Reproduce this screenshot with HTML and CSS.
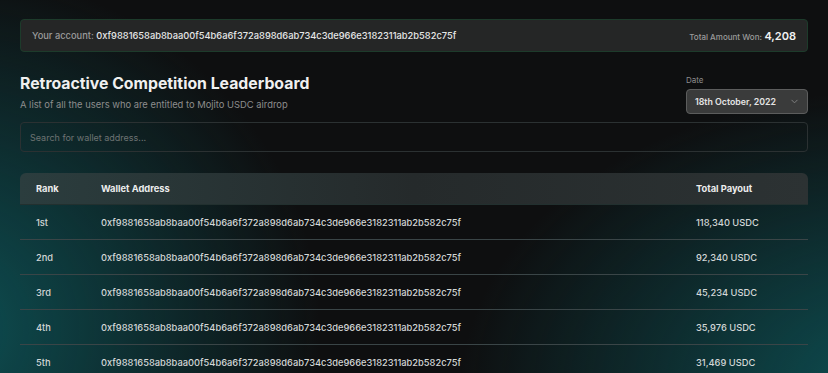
FILE: index.html
```html
<!DOCTYPE html>
<html lang="en">
<head>
  <meta charset="UTF-8">
  <meta name="viewport" content="width=device-width, initial-scale=1.0">
  <title>Leaderboard</title>
  <link rel="stylesheet" href="styles.css">
</head>
<body>
  <div class="account">
    <div class="account-id"><span class="muted">Your account:</span> 0xf9881658ab8baa00f54b6a6f372a898d6ab734c3de966e3182311ab2b582c75f</div>
    <div class="account-won"><span class="muted small">Total Amount Won:</span> <span class="won">4,208</span></div>
  </div>

  <div class="head">
    <div>
      <h1>Retroactive Competition Leaderboard</h1>
      <div class="sub">A list of all the users who are entitled to Mojito USDC airdrop</div>
    </div>
    <div class="date">
      <label>Date</label>
      <div class="select">
        <span>18th October, 2022</span>
        <svg width="9" height="9" viewBox="0 0 10 10"><path d="M2 3.5 L5 6.5 L8 3.5" fill="none" stroke="#7e7e7e" stroke-width="1.1" stroke-linecap="round"/></svg>
      </div>
    </div>
  </div>

  <input class="search" type="text" placeholder="Search for wallet address...">

  <div class="table">
    <div class="row header">
      <div>Rank</div>
      <div>Wallet Address</div>
      <div>Total Payout</div>
    </div>
    <div class="row">
      <div>1st</div>
      <div>0xf9881658ab8baa00f54b6a6f372a898d6ab734c3de966e3182311ab2b582c75f</div>
      <div>118,340 USDC</div>
    </div>
    <div class="row">
      <div>2nd</div>
      <div>0xf9881658ab8baa00f54b6a6f372a898d6ab734c3de966e3182311ab2b582c75f</div>
      <div>92,340 USDC</div>
    </div>
    <div class="row">
      <div>3rd</div>
      <div>0xf9881658ab8baa00f54b6a6f372a898d6ab734c3de966e3182311ab2b582c75f</div>
      <div>45,234 USDC</div>
    </div>
    <div class="row">
      <div>4th</div>
      <div>0xf9881658ab8baa00f54b6a6f372a898d6ab734c3de966e3182311ab2b582c75f</div>
      <div>35,976 USDC</div>
    </div>
    <div class="row">
      <div>5th</div>
      <div>0xf9881658ab8baa00f54b6a6f372a898d6ab734c3de966e3182311ab2b582c75f</div>
      <div>31,469 USDC</div>
    </div>
  </div>
</body>
</html>
```

FILE: styles.css
```css
html {
  height: 100%;
}
body {
  margin: 0;
  padding: 19px 20px 0;
  min-height: 100%;
  box-sizing: border-box;
  font-family: 'Inter', sans-serif;
  color: #e6e6e6;
  background:
    radial-gradient(ellipse 380px 360px at -60px 330px, rgba(13,80,84,1), rgba(13,80,84,0) 100%),
    radial-gradient(ellipse 440px 300px at 900px 390px, rgba(13,80,84,1), rgba(13,80,84,0) 100%),
    #0e0f10;
  overflow: hidden;
}
.account {
  display: flex;
  justify-content: space-between;
  align-items: center;
  height: 33px;
  box-sizing: border-box;
  padding: 0 11px;
  background: #252626;
  border: 1px solid #1d3b2b;
  border-radius: 4px;
  font-size: 9.3px;
  font-weight: 500;
}
.muted {
  color: #9b9b9b;
}
.small {
  font-size: 8px;
}
.won {
  font-size: 11px;
  font-weight: 600;
  color: #f2f2f2;
}
.head {
  display: flex;
  justify-content: space-between;
  align-items: flex-start;
  margin-top: 20px;
}
h1 {
  margin: 2px 0 0;
  font-size: 15.8px;
  font-weight: 700;
  color: #f0f0f0;
}
.sub {
  margin-top: 6px;
  font-size: 9.4px;
  color: #8d8d8d;
}
.date {
  display: flex;
  flex-direction: column;
  width: 122px;
  padding-top: 3px;
}
.date label {
  font-size: 8px;
  color: #8d8d8d;
  margin-bottom: 4px;
}
.select {
  display: flex;
  justify-content: space-between;
  align-items: center;
  height: 25px;
  box-sizing: border-box;
  padding: 0 8px 0 8px;
  background: #3a3b3b;
  border: 1px solid #5c5d5d;
  border-radius: 4px;
  font-size: 8.8px;
  font-weight: 600;
  color: #e4e4e4;
}
.search {
  display: block;
  width: 100%;
  box-sizing: border-box;
  height: 30px;
  margin-top: 8px;
  padding: 0 9px;
  background: transparent;
  border: 1px solid #2b3132;
  border-radius: 4px;
  font-family: inherit;
  font-size: 9px;
  color: #ddd;
  outline: none;
}
.search::placeholder {
  color: #6d7373;
}
.table {
  margin-top: 21px;
}
.row {
  display: grid;
  grid-template-columns: 65px 1fr 112px;
  align-items: center;
  height: 35px;
  box-sizing: border-box;
  padding-left: 16px;
  border-bottom: 1px solid #3a4547;
  font-size: 9.3px;
  font-weight: 500;
  color: #d2d6d6;
}
.row.header {
  height: 32px;
  border-bottom: 1px solid #22302f;
  border-radius: 6px 6px 0 0;
  background: linear-gradient(90deg, #2b3d3e 0%, #252a2b 50%, #2c3233 100%);
  font-weight: 700;
  color: #ececec;
}
```
